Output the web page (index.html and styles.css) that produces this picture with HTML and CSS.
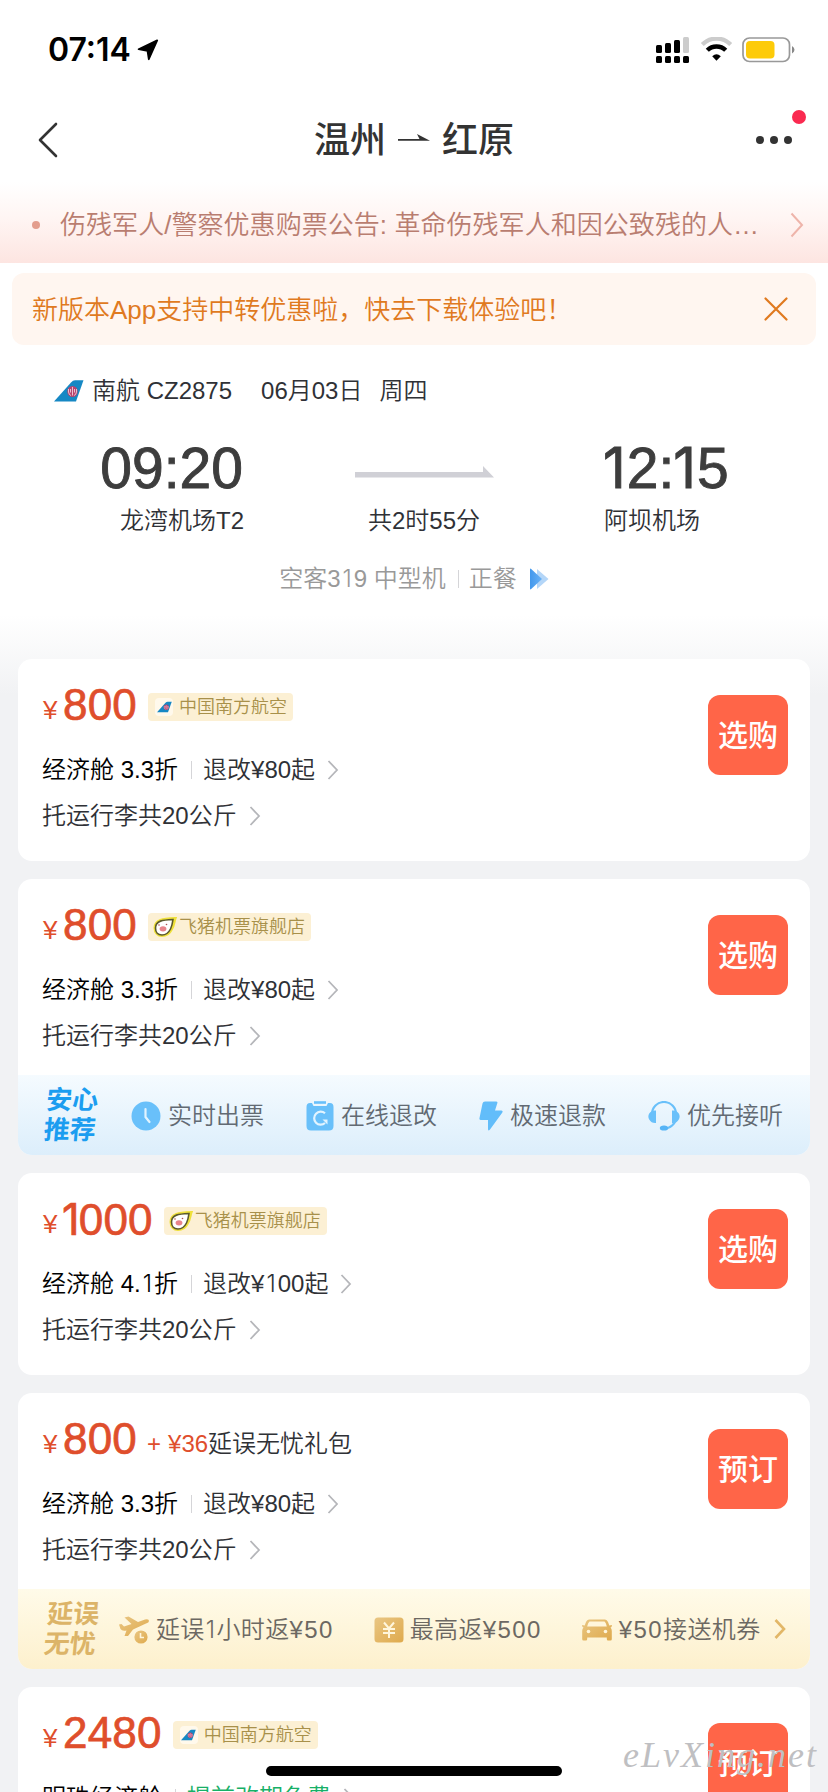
FILE: index.html
```html
<!DOCTYPE html>
<html lang="zh-CN">
<head>
<meta charset="utf-8">
<title>温州 - 红原</title>
<link rel="stylesheet" href="styles.css">
</head>
<body>
<svg class="defs" width="0" height="0">
  <defs>
    <linearGradient id="gold" x1="0" y1="0" x2="1" y2="1"><stop offset="0" stop-color="#e9c683"/><stop offset="1" stop-color="#dfaa4d"/></linearGradient>
    <linearGradient id="play" x1="0" y1="0" x2="1" y2="0"><stop offset="0" stop-color="#4398ec"/><stop offset="1" stop-color="#69b1f6"/></linearGradient>
    <symbol id="tail" viewBox="0 0 30 22">
      <path d="M0 21.500L17 2.500Q19 0.300 21 0.300H29.500L22 21.500Z" fill="#1688c4"/>
      <ellipse cx="18.500" cy="11.500" rx="5.200" ry="5.600" fill="#b8446f"/>
      <path d="M14.500 9V12Q15 15 17 15.500M22.500 9V12Q22 15 20 15.500M18.500 7V15.500M16.500 9V12.500M20.500 9V12.500" fill="none" stroke="#f6dfe8" stroke-width="0.800"/>
    </symbol>
    <symbol id="chev" viewBox="0 0 12 20"><path d="M1.500 1L10 10L1.500 19" fill="none" stroke="currentColor" stroke-width="1.800"/></symbol>
    <symbol id="pig" viewBox="0 0 24 20">
      <path d="M2 11C2 3 10 2 22 1.500C21 4 21 8 18.500 12C16 17 12 18.500 9 18.500C5 18.500 2 15.500 2 11Z" fill="#fff" stroke="#efe13a" stroke-width="3"/>
      <path d="M2.500 11C2.500 3.500 10 3 20 2.500C19.500 6 19 9 17.500 12C15 17 12 18 9 18C5 18 2.500 15.500 2.500 11Z" fill="#fff" stroke="#5c5a2c" stroke-width="1.600"/>
      <ellipse cx="10" cy="11.800" rx="3.400" ry="2.600" fill="#e8848a"/>
      <circle cx="6" cy="8" r="0.800" fill="#a55"/><circle cx="13.500" cy="7.500" r="0.800" fill="#a55"/>
    </symbol>
  </defs>
</svg>
<div class="screen">
  <header class="status">
    <span class="clock">07:14</span>
    <svg class="locate" width="22" height="22" viewBox="0 0 22 22"><path d="M20.200 1.400L11.800 20.200L10.500 11.800L1.600 10.200Z" fill="#000" stroke="#000" stroke-width="1.800" stroke-linejoin="round"/></svg>
    <svg class="signals" width="140" height="28" viewBox="0 0 140 28">
      <rect x="1" y="8" width="6" height="8" rx="1.500"/><rect x="10" y="6" width="6" height="10" rx="1.500"/><rect x="19" y="3" width="6" height="13" rx="1.500"/><rect x="28" y="0" width="6" height="16" rx="1.500" fill="#ccc"/>
      <rect x="1" y="19" width="6" height="7" rx="1.500"/><rect x="10" y="19" width="6" height="7" rx="1.500"/><rect x="19" y="19" width="6" height="7" rx="1.500"/><rect x="28" y="19" width="6" height="7" rx="1.500"/>
      <path d="M47.300 7.500A20 20 0 0 1 75.700 7.500" fill="none" stroke="#ccc" stroke-width="4.200"/>
      <path d="M52.300 13.300A13 13 0 0 1 70.700 13.300" fill="none" stroke="#000" stroke-width="4.400"/>
      <path d="M57.200 19.300Q61.500 15.300 65.800 19.300L61.500 23.700Z"/>
      <rect x="88" y="1" width="46.500" height="23.500" rx="6.500" fill="none" stroke="#999" stroke-width="1.700"/>
      <rect x="91" y="4" width="28.500" height="17.500" rx="4" fill="#fdcb09"/>
      <path d="M137 9Q142 12.700 137 16.500Z" fill="#888"/>
    </svg>
  </header>
  <nav class="nav">
    <svg class="back" width="22" height="38" viewBox="0 0 22 38"><path d="M20 3L4 19L20 35" fill="none" stroke="#333" stroke-width="2.600" stroke-linecap="round" stroke-linejoin="round"/></svg>
    <h1 class="route">温州<svg class="to" width="32" height="12" viewBox="0 0 32 12"><path d="M0 7.800H32L19 1L21.500 5.900H0Z" fill="#333"/></svg>红原</h1>
    <div class="more"><i></i><i></i><i></i><b></b></div>
  </nav>
  <div class="notice">
    <i class="dot"></i><span class="notice-text">伤残军人/警察优惠购票公告: 革命伤残军人和因公致残的人…</span>
    <svg class="notice-arrow" width="14" height="26" viewBox="0 0 14 26"><path d="M1.500 1.500L12 13L1.500 24.500" fill="none" stroke="#eeb4aa" stroke-width="2"/></svg>
  </div>
  <div class="banner">
    <span>新版本App支持中转优惠啦，快去下载体验吧！</span>
    <svg width="24" height="24" viewBox="0 0 24 24"><path d="M1.500 1.500L22.500 22.500M22.500 1.500L1.500 22.500" stroke="#e07a1f" stroke-width="2.200" stroke-linecap="round"/></svg>
  </div>
  <section class="flight">
    <div class="flight-no"><svg width="30" height="22"><use href="#tail"/></svg><span>南航 CZ2875</span><span class="date">06月03日</span><span class="week">周四</span></div>
    <div class="times">
      <div class="from"><b>09:20</b><span>龙湾机场T2</span></div>
      <div class="dur"><svg width="139" height="12" viewBox="0 0 139 12"><path d="M0 6H128V0L139 11.500H0Z" fill="#d0d0d6"/></svg><span>共2时55分</span></div>
      <div class="dest"><b><em>1</em>2:<em>1</em>5</b><span>阿坝机场</span></div>
    </div>
    <div class="plane"><span>空客3<em class="n">1</em>9 中型机</span><i class="bar"></i><span>正餐</span><svg width="19" height="22" viewBox="0 0 19 22"><path d="M7 1L18.500 11L7 21Z" fill="#b4d6f8"/><path d="M0 1.500Q0 0 1.200 1L12 11L1.200 21Q0 22 0 20.500Z" fill="url(#play)"/></svg></div>
  </section>
  <main class="cards">
    <article class="card">
      <div class="body">
        <div class="price"><small>¥</small><strong>800</strong><span class="tag air"><i><svg width="15" height="12"><use href="#tail"/></svg></i>中国南方航空</span></div>
        <div class="line cabin"><span>经济舱 3.3折</span><i class="bar"></i><span class="rule">退改¥80起</span><svg class="chev"><use href="#chev"/></svg></div>
        <div class="line"><span>托运行李共20公斤</span><svg class="chev"><use href="#chev"/></svg></div>
      </div>
      <button class="buy">选购</button>
    </article>
    <article class="card">
      <div class="body tight">
        <div class="price"><small>¥</small><strong>800</strong><span class="tag pig"><svg width="24" height="20"><use href="#pig"/></svg>飞猪机票旗舰店</span></div>
        <div class="line cabin"><span>经济舱 3.3折</span><i class="bar"></i><span class="rule">退改¥80起</span><svg class="chev"><use href="#chev"/></svg></div>
        <div class="line"><span>托运行李共20公斤</span><svg class="chev"><use href="#chev"/></svg></div>
      </div>
      <div class="strip blue">
        <div class="label">安心<br>推荐</div>
        <ul>
          <li><svg width="30" height="30" viewBox="0 0 30 30"><circle cx="15" cy="15" r="14.500" fill="#69c0fa"/><path d="M14.500 8V16L18.500 21" fill="none" stroke="#e2f4ff" stroke-width="2.200" stroke-linecap="round"/></svg>实时出票</li>
          <li><svg width="28" height="30" viewBox="0 0 28 30"><path d="M4 2H6L7.500 5H20.500L22 2H24Q27.500 2 27.500 6V25Q27.500 29.500 23 29.500H5Q0.500 29.500 0.500 25V6Q0.500 2 4 2Z" fill="#69c0fa"/><path d="M8 1.500H20" stroke="#69c0fa" stroke-width="2.600"/><path d="M19 12.300A6.500 6.500 0 1 0 19 22" fill="none" stroke="#e2f4ff" stroke-width="2.200"/><path d="M16.500 18.500H21.500V23.500Z" fill="#e2f4ff"/></svg>在线退改</li>
          <li><svg width="24" height="30" viewBox="0 0 24 30"><path d="M6 0.500H17Q19 0.500 18.300 2.300L16 9.500H22.500Q24.500 10 23 12L11 28.500Q9 30.500 9 28V19H2Q0 19 0.500 17L3.500 2.500Q4 0.500 6 0.500Z" fill="#62bdfa"/></svg>极速退款</li>
          <li><svg width="32" height="30" viewBox="0 0 32 30"><path d="M4 13A12 12 0 0 1 28 13M28 17A12 11.500 0 0 1 16 27.500" fill="none" stroke="#69c0fa" stroke-width="2.200"/><path d="M8 9.500V22Q3.500 22.500 1.200 18.500Q-0.500 15.500 1.200 12.500Q3.500 9 8 9.500ZM24 9.500V22Q28.500 22.500 30.800 18.500Q32.500 15.500 30.800 12.500Q28.500 9 24 9.500Z" fill="#69c0fa"/><ellipse cx="16" cy="27" rx="4.200" ry="2.600" fill="#55b4f6"/></svg>优先接听</li>
        </ul>
      </div>
      <button class="buy">选购</button>
    </article>
    <article class="card">
      <div class="body">
        <div class="price"><small>¥</small><strong><em>1</em>000</strong><span class="tag pig"><svg width="24" height="20"><use href="#pig"/></svg>飞猪机票旗舰店</span></div>
        <div class="line cabin"><span>经济舱 4.<em class="n">1</em>折</span><i class="bar"></i><span class="rule">退改¥<em class="n">1</em>00起</span><svg class="chev"><use href="#chev"/></svg></div>
        <div class="line"><span>托运行李共20公斤</span><svg class="chev"><use href="#chev"/></svg></div>
      </div>
      <button class="buy">选购</button>
    </article>
    <article class="card">
      <div class="body tight">
        <div class="price"><small>¥</small><strong>800</strong><span class="gift"><i>+</i><u>¥36</u>延误无忧礼包</span></div>
        <div class="line cabin"><span>经济舱 3.3折</span><i class="bar"></i><span class="rule">退改¥80起</span><svg class="chev"><use href="#chev"/></svg></div>
        <div class="line"><span>托运行李共20公斤</span><svg class="chev"><use href="#chev"/></svg></div>
      </div>
      <div class="strip yellow">
        <div class="label"><span>延误</span><br>无忧</div>
        <ul>
          <li><svg width="31" height="28" viewBox="0 0 31 28"><path d="M5.500 1.500L9.500 0.500L19 6L26 3.500Q30 2.500 30 5Q30 6.500 27 7.500L14 13.500L9 20L5.500 20L7.500 14.500Q3 15.500 1.500 13L0 8.500L2.500 8L5 10.500L12.500 8Z" fill="url(#gold)"/><circle cx="22" cy="21" r="6.600" fill="url(#gold)"/><path d="M21.500 17V21.500H25" fill="none" stroke="#fff6dc" stroke-width="1.600"/></svg>延误<em class="n slim">1</em>小时返<span class="sum">¥50</span></li>
          <li><svg width="30" height="26" viewBox="0 0 30 26"><rect x="0.500" y="0.500" width="29" height="25" rx="3.500" fill="url(#gold)"/><path d="M10 5.500L15 11.500L20 5.500M9 12H21M9 16H21M15 11.500V21" fill="none" stroke="#fff6dc" stroke-width="2"/></svg>最高返<span class="sum">¥500</span></li>
          <li><svg width="30" height="22" viewBox="0 0 30 22"><path d="M7 0.500H23Q25 0.500 26 3L27.300 6.500L30 6L29.500 8L28.500 8.500Q29.800 9.500 29.800 12V20Q29.800 21.500 28.500 21.500H26Q24.800 21.500 24.800 20V18.500H5.200V20Q5.200 21.500 4 21.500H1.500Q0.200 21.500 0.200 20V12Q0.200 9.500 1.500 8.500L0.500 8L0 6L2.700 6.500L4 3Q5 0.500 7 0.500Z" fill="url(#gold)"/><path d="M7.500 2.500H22.500Q24 3.500 24.800 7.500H5.200Q6 3.500 7.500 2.500Z" fill="#fff6dc"/><circle cx="6.500" cy="12.500" r="1.800" fill="#fff6dc"/><circle cx="23.500" cy="12.500" r="1.800" fill="#fff6dc"/></svg><span class="sum">¥50</span>接送机券</li>
        </ul>
        <svg class="go" width="12" height="20" viewBox="0 0 12 20"><path d="M1.500 1L10 10L1.500 19" fill="none" stroke="#e2b768" stroke-width="2.600"/></svg>
      </div>
      <button class="buy">预订</button>
    </article>
    <article class="card">
      <div class="body">
        <div class="price"><small>¥</small><strong>2480</strong><span class="tag air"><i><svg width="15" height="12"><use href="#tail"/></svg></i>中国南方航空</span></div>
        <div class="line cabin"><span>明珠经济舱</span><i class="bar"></i><span class="rule free">提前改期免费</span><svg class="chev"><use href="#chev"/></svg></div>
        <div class="line"><span>托运行李共20公斤</span><svg class="chev"><use href="#chev"/></svg></div>
      </div>
      <button class="buy">预订</button>
    </article>
  </main>
  <div class="home"></div>
  <div class="mark">eLvXing.net</div>
</div>
</body>
</html>
```
FILE: styles.css
```css
* { box-sizing: border-box; }
body {
  margin: 0;
  font-family: "Liberation Sans", "Noto Sans CJK SC", sans-serif;
  font-weight: 350;
  color: #2f3136;
}
i, em { font-style: normal; }
em { font-family: Inter, sans-serif; font-size: 0.98em; }
.n { display: inline-block; width: 0.567em; text-align: center; line-height: 1; }
.slim { width: 0.5em; }
u { text-decoration: none; }
svg { display: block; flex: none; }
.defs { position: absolute; }
.screen {
  position: relative;
  width: 828px;
  height: 1792px;
  overflow: hidden;
  background: linear-gradient(#fff 615px, #f1f2f4 695px);
}
.status { display: flex; align-items: center; height: 98px; padding: 0 33px 0 48px; }
.clock { font: 600 32px/40px Inter, sans-serif; padding-top: 2px; color: #000; }
.locate { margin-left: 6px; margin-top: 2px; }
.signals { margin-left: auto; margin-top: 4px; }
.nav { position: relative; display: flex; align-items: center; justify-content: space-between; height: 84px; padding: 0 36px; }
.back { margin-right: 14px; }
.route { display: flex; align-items: center; margin: 2px 0 0; font-size: 36px; line-height: 50px; font-weight: 500; color: #333; }
.to { margin: 0 12px 5px; }
.more { display: flex; gap: 6px; }
.more i { width: 8px; height: 8px; border-radius: 50%; background: #333; }
.more b { position: absolute; right: 22px; top: 12px; width: 14px; height: 14px; border-radius: 50%; background: #fa2a50; }
.notice {
  display: flex; align-items: center; height: 81px; padding: 4px 24px 0 32px;
  background: linear-gradient(#fff, #fff5f3 45%, #fde5e1);
  color: #b97d70; font-size: 26px; line-height: 40px; white-space: nowrap;
}
.notice-text { letter-spacing: 0.050px; }
.dot { width: 8px; height: 8px; border-radius: 50%; background: #e39d8d; margin-right: 20px; }
.notice-arrow { margin-left: auto; }
.banner {
  display: flex; align-items: center; justify-content: space-between;
  margin: 10px 12px 0; height: 72px; padding: 0 28px 0 20px; border-radius: 12px;
  background: #fff6f0; color: #e07a1f; font-size: 26px; line-height: 40px;
}
.banner span { padding-top: 2px; }
.flight { height: 314px; font-size: 24px; line-height: 36px; }
.flight-no { display: flex; align-items: center; padding: 27px 0 0 54px; }
.flight-no span { padding-top: 1px; }
.flight-no svg + span { margin-left: 8px; }
.date { margin-left: 29px; }
.week { margin-left: 17px; }
.times { display: flex; margin-top: 27px; }
.times b { display: block; height: 66px; font-size: 57px; line-height: 64px; font-weight: 400; color: #3d3d3d; -webkit-text-stroke: 0.900px #3d3d3d; }
.times span { display: block; margin-top: 1px; }
.from { width: 244px; text-align: right; }
.from b { padding-right: 1px; }
.dur { width: 360px; display: flex; flex-direction: column; align-items: center; }
.dur svg { margin: 30px 0 24px; }
.dest b em { margin: 0 1px 0 -1px; }
.plane { display: flex; align-items: center; justify-content: center; margin-top: 22px; color: #999; }
.plane .bar { margin: 0 10px 0 12px; }
.plane svg { margin-left: 13px; }
.bar { width: 1px; height: 18px; background: #d5d5d8; }
.cards { display: flex; flex-direction: column; gap: 18px; padding: 0 18px; }
.card { position: relative; border-radius: 14px; background: #fff; overflow: hidden; flex: none; }
.body { height: 202px; padding: 16px 0 0 24px; }
.body.tight { height: 196px; }
.price { display: flex; align-items: center; height: 60px; margin-bottom: 12px; padding-left: 1px; color: #df4e2c; }
.price small { font-size: 26px; line-height: 60px; padding-top: 10px; width: 20px; }
.price strong { font-size: 44px; line-height: 60px; font-weight: 400; letter-spacing: 0.200px; -webkit-text-stroke: 0.700px #df4e2c; }
.price em { margin: 0 -1px; }
.tag { display: flex; align-items: center; height: 28px; margin: 3px 0 0 11px; border-radius: 4px; background: #fcf0d4; color: #a8904a; font-size: 18px; line-height: 28px; padding-right: 6px; }
.tag.air i { display: flex; align-items: center; justify-content: center; width: 18px; height: 18px; margin: 0 6px 0 7px; border-radius: 4px; background: #fff9ec; }
.tag.pig svg { margin: 0 2px 0 5px; }
.gift { margin: 9px 0 0 10px; font-size: 24px; line-height: 36px; color: #2f3136; }
.gift i, .gift u { color: #df4e2c; }
.gift i { margin-right: 7px; }
.line { display: flex; align-items: center; height: 46px; font-size: 24px; line-height: 46px; }
.line.cabin > span:first-child { color: #000; }
.line .bar { margin: 0 11px 0 13px; }
.line .rule { color: #2f3136; }
.line .free { color: #17b067; }
.chev { width: 12px; height: 20px; margin-left: 12px; color: #b5b6ba; }
.buy { position: absolute; right: 22px; top: 36px; width: 80px; height: 80px; border: 0; padding: 1px 0 0; border-radius: 12px; background: #ff6548; color: #fff; font: 500 30px/80px "Liberation Sans", "Noto Sans CJK SC", sans-serif; }
.strip { display: flex; align-items: center; height: 80px; padding-left: 27px; color: #626a73; font-size: 24px; }
.strip ul { display: flex; align-items: center; margin: 0; padding: 1px 0 0; list-style: none; }
.strip li { display: flex; align-items: center; line-height: 36px; white-space: nowrap; }
.strip li svg { margin-right: 7px; }
.sum { letter-spacing: 1.400px; }
.label { width: 60px; font-size: 26px; line-height: 30px; font-weight: 700; transform: skewX(-5deg); }
.blue { background: linear-gradient(#f5fbff, #dceefb); }
.blue .label { color: #1b9df0; }
.blue ul { margin-left: 26px; gap: 42px; }
.yellow { background: linear-gradient(#fffbe9, #fdf0cd); color: #6c6862; }
.yellow .label { color: #dcb468; }
.yellow .label span { padding-left: 1px; }
.yellow ul { margin-left: 14px; gap: 40px; letter-spacing: 0.350px; }
.yellow li svg { margin-right: 6px; }
.yellow li:last-child svg { margin-right: 7px; }
.go { margin-left: 14px; }
.home { position: absolute; left: 266px; top: 1766px; width: 296px; height: 10px; border-radius: 5px; background: #000; }
.mark { position: absolute; left: 623px; top: 1732px; font: italic 400 36px/46px "Liberation Serif", serif; letter-spacing: 2px; color: #bfbfc2; }
```
